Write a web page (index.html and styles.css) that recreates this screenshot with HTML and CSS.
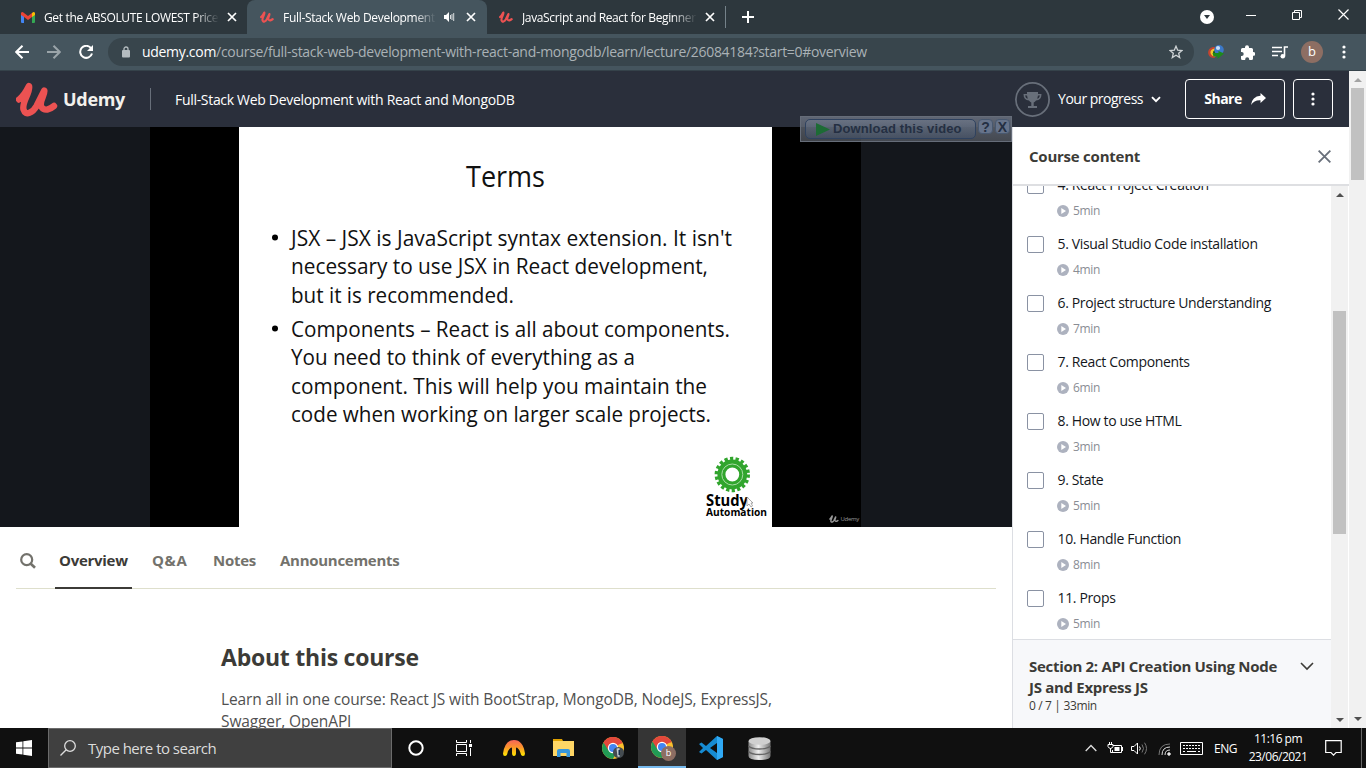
FILE: index.html
```html
<!DOCTYPE html>
<html lang="en">
<head>
<meta charset="utf-8">
<title>Full-Stack Web Development with React and MongoDB</title>
<link rel="stylesheet" href="styles.css">
</head>
<body>
<svg class="defs" width="0" height="0">
  <symbol id="u" viewBox="0 0 42 35"><path d="M3 17.500C8 14 10.500 9 13 4C15 10 5.500 20 7.500 27.500C9.500 34.500 17 30.500 20.500 24C23.500 18 26 13 28.300 8.500C29.500 12 22.500 20 25.500 25C28.500 29.500 34 27.500 38 24" fill="none" stroke="currentColor" stroke-width="6.400" stroke-linecap="round" stroke-linejoin="round"/></symbol>
  <symbol id="x" viewBox="0 0 10 10"><path d="M1 1l8 8M9 1l-8 8" fill="none" stroke="currentColor" stroke-width="1.700"/></symbol>
  <symbol id="play" viewBox="0 0 12 12"><circle cx="6" cy="6" r="6" fill="#adb2bf"/><path d="M4.300 3v6l4.700-3z" fill="#fff"/></symbol>
  <symbol id="chrome" viewBox="0 0 22 22"><circle cx="11" cy="11" r="11" fill="#fbc02d"/><path d="M11 11L1.500 5.500A11 11 0 0 1 20.500 5.500z" fill="#e3483c"/><path d="M11 11L1.500 5.500A11 11 0 0 0 11 22l4-8z" fill="#219b55"/><path d="M1.500 5.500l5 8 4.500-7h9.500A11 11 0 0 0 1.500 5.500" fill="#e3483c"/><circle cx="11" cy="11" r="5.200" fill="#fff"/><circle cx="11" cy="11" r="4" fill="#4285f4"/></symbol>
</svg>

<header class="tabs">
  <div class="tab">
    <svg class="gmail" viewBox="0 0 14 11"><path d="M0 1v9q0 1 1 1h2V4z" fill="#4285f4"/><path d="M14 1v9q0 1-1 1h-2V4z" fill="#34a853"/><path d="M11 4V1q2-2 3 0v2l-3 2z" fill="#fbbc04"/><path d="M0 3V1q1-2 3 0l4 3 4-3v4L7 8 3 5z" fill="#ea4335"/></svg>
    <span class="label t1">Get the ABSOLUTE LOWEST Price</span><svg class="close"><use href="#x"/></svg>
  </div>
  <div class="tab active">
    <svg class="fav"><use href="#u"/></svg><span class="label t2">Full-Stack Web Development</span>
    <svg class="sound" viewBox="0 0 11 10"><path d="M0 3h2l3-3v10l-3-3h-2z" fill="#fff"/><path d="M6.500 3v4M8 2v6M9.700 1v8" stroke="#fff" stroke-width=".8"/></svg>
    <svg class="close"><use href="#x"/></svg>
  </div>
  <div class="tab third">
    <svg class="fav"><use href="#u"/></svg><span class="label t3">JavaScript and React for Beginner</span><svg class="close"><use href="#x"/></svg>
  </div>
  <svg class="plus" viewBox="0 0 12 12"><path d="M6 0v12M0 6h12" stroke="#fff" stroke-width="2"/></svg>
  <div class="window">
    <svg width="14" height="14" viewBox="0 0 14 14"><circle cx="7" cy="7" r="7" fill="#fff"/><path d="M4 5h6l-3 4z" fill="#2d373d"/></svg>
    <svg class="min" width="10" height="10"><path d="M0 5.500h10" stroke="#fff"/></svg>
    <svg class="max" width="10" height="10" fill="none" stroke="#fff"><path d="M.5 2.500h7v7h-7zM2.500 2.500v-2h7v7h-2"/></svg>
    <svg class="quit" width="11" height="11"><path d="M.5.5l10 10M10.500.5l-10 10" stroke="#fff" stroke-width="1.200"/></svg>
  </div>
</header>

<nav class="toolbar">
  <svg class="nav" viewBox="0 0 14 14"><path d="M14 7H1.500M7.500.7L1.200 7l6.300 6.300" fill="none" stroke="#fff" stroke-width="2"/></svg>
  <svg class="nav dim" viewBox="0 0 14 14"><path d="M0 7h12.500M6.500.7L12.800 7l-6.300 6.300" fill="none" stroke="#9aa4a9" stroke-width="2"/></svg>
  <svg class="nav reload" viewBox="0 0 14 14"><path d="M12 3.200A6 6 0 1 0 13 8.500" fill="none" stroke="#fff" stroke-width="2"/><path d="M14 0v6H8z" fill="#fff"/></svg>
  <div class="omnibox">
    <svg width="8" height="12" viewBox="0 0 8 12"><rect y="4" width="8" height="7.500" rx="1" fill="#b4bcc0"/><path d="M2 5V3a2 2 0 0 1 4 0v2" fill="none" stroke="#b4bcc0" stroke-width="1.300"/></svg>
    <span class="url"><b>udemy.com</b>/course/full-stack-web-development-with-react-and-mongodb/learn/lecture/26084184?start=0#overview</span>
    <svg class="star" width="14" height="14" viewBox="0 0 14 14"><path d="M7 1.200l1.700 4 4.200.3-3.200 2.800 1 4.200L7 10.200l-3.700 2.300 1-4.200L1.100 5.500l4.200-.3z" fill="none" stroke="#cfd4d6" stroke-width="1.300"/></svg>
  </div>
  <svg class="idm" viewBox="0 0 16 14"><path d="M7 2C2 1.500-.5 5 .3 9q1 4 6.200 4L8 10z" fill="#c44430"/><path d="M7 3.500Q2 4 2.500 8q1 3.500 5 3.500z" fill="#f4c92d"/><path d="M7 5Q4.500 6 5 8l3 2z" fill="#1c5a1a"/><circle cx="11" cy="4.800" r="4.800" fill="#3c79c9"/><circle cx="10" cy="3" r="2.100" fill="#c9e0f7"/><path d="M4.500 8h6V6l5.500 2.500-6.500 5.500v-2.500H5.500z" fill="#1d8a1a"/></svg>
  <svg class="puzzle" viewBox="0 0 15 15"><path d="M1 4.500Q1 3 2.500 3H5V2.200a2 2 0 0 1 4 0V3h2.500Q13 3 13 4.500V7h.3a1.800 1.800 0 0 1 0 3.800H13v2.700q0 1.500-1.500 1.500H9.200v-.7a2 2 0 0 0-4 0v.7H2.500Q1 15 1 13.500V11h.7a2 2 0 0 0 0-4H1z" fill="#fff"/></svg>
  <svg class="queue" viewBox="0 0 16 13"><path d="M0 1.500h10M0 5.500h10M0 9.500h6M12.500 10V1H16" fill="none" stroke="#fff" stroke-width="1.600"/><circle cx="10.800" cy="10.200" r="2.300" fill="#fff"/></svg>
  <span class="avatar">b</span>
  <svg class="dots" viewBox="0 0 4 14"><circle cx="2" cy="2" r="1.600"/><circle cx="2" cy="7" r="1.600"/><circle cx="2" cy="12" r="1.600"/></svg>
</nav>

<div class="page">
  <div class="viewport">
    <header class="site">
      <svg class="logo"><use href="#u"/></svg><span class="brand">Udemy</span>
      <span class="course">Full-Stack Web Development with React and MongoDB</span>
      <div class="progress">
        <svg width="35" height="35" viewBox="0 0 35 35"><circle cx="17.500" cy="17.500" r="16.600" fill="none" stroke="#686f7a" stroke-width="1.800"/><path d="M12 10h11v2h3.500q0 6-5.500 6.500-1 1.500-2.300 2V24H22v2h-9v-2h3.300v-3.500q-1.300-.5-2.300-2Q8.500 18 8.500 12H12zM10 13.500q.5 2.700 2.800 3.300L12 13.500zM25 13.500h-2l-.8 3.300q2.300-.6 2.800-3.300" fill="#686f7a"/></svg>
        <span>Your progress</span>
        <svg width="10" height="7"><path d="M1 1.200l4 4 4-4" fill="none" stroke="#fff" stroke-width="1.900"/></svg>
      </div>
      <div class="btn share"><span>Share</span><svg width="15" height="12" viewBox="0 0 15 12"><path d="M9.500 0L15 5l-5.500 5V7.300Q3 7 0 12 1 3.500 9.500 2.800z" fill="#fff"/></svg></div>
      <div class="btn more"><svg class="dots" viewBox="0 0 4 14"><circle cx="2" cy="2" r="1.600"/><circle cx="2" cy="7" r="1.600"/><circle cx="2" cy="12" r="1.600"/></svg></div>
    </header>
    <div class="columns">
      <main>
        <div class="video"><div class="frame">
          <svg class="slide" width="533" height="400" viewBox="239 127 533 400">
            <rect x="239" y="127" width="533" height="400" fill="#fff"/>
            <g class="copy">
              <text class="heading" x="466" y="187" textLength="79" lengthAdjust="spacingAndGlyphs">Terms</text>
              <text x="291" y="245.500" textLength="441" lengthAdjust="spacingAndGlyphs">JSX – JSX is JavaScript syntax extension. It isn't</text>
              <text x="291" y="274" textLength="417" lengthAdjust="spacingAndGlyphs">necessary to use JSX in React development,</text>
              <text x="291" y="302.500" textLength="223" lengthAdjust="spacingAndGlyphs">but it is recommended.</text>
              <text x="291" y="336.500" textLength="439" lengthAdjust="spacingAndGlyphs">Components – React is all about components.</text>
              <text x="291" y="365" textLength="344" lengthAdjust="spacingAndGlyphs">You need to think of everything as a</text>
              <text x="291" y="393.500" textLength="416" lengthAdjust="spacingAndGlyphs">component. This will help you maintain the</text>
              <text x="291" y="422" textLength="420" lengthAdjust="spacingAndGlyphs">code when working on larger scale projects.</text>
            </g>
            <circle cx="275" cy="237.500" r="3"/><circle cx="275" cy="328.500" r="3"/>
            <circle cx="732.300" cy="474.500" r="15.700" fill="none" stroke="#31a52d" stroke-width="4" stroke-dasharray="3.200 2.280"/>
            <circle cx="732.300" cy="474.500" r="10.900" fill="none" stroke="#31a52d" stroke-width="8"/>
            <circle cx="732.300" cy="474.500" r="10.500" fill="none" stroke="#a9dca6" stroke-width="1"/>
            <text class="study" x="706" y="505.500" textLength="42" lengthAdjust="spacingAndGlyphs">Study</text>
            <text class="auto" x="706" y="516" textLength="61" lengthAdjust="spacingAndGlyphs">Automation</text>
            <path d="M747 497v9l2-2 2 3 1.500-1-1.500-3h2z" fill="#fff" stroke="#888" stroke-width=".7"/>
          </svg>
          <div class="watermark"><svg width="10" height="8"><use href="#u"/></svg>Udemy</div>
        </div></div>
        <nav class="menu">
          <svg width="16" height="16" viewBox="0 0 16 16"><circle cx="6.700" cy="6.700" r="5.500" fill="none" stroke="#73726c" stroke-width="2.200"/><path d="M10.500 10.500l4.500 4.300" stroke="#73726c" stroke-width="2.600"/></svg>
          <span class="on">Overview</span><span class="m2">Q&amp;A</span><span class="m3">Notes</span><span class="m4">Announcements</span>
        </nav>
        <section class="about"><h1>About this course</h1><p>Learn all in one course: React JS with BootStrap, MongoDB, NodeJS, ExpressJS,<br><span>Swagger, OpenAPI</span></p></section>
      </main>
      <aside>
        <div class="aside-head"><span>Course content</span><svg width="13" height="13" viewBox="0 0 10 10"><path d="M.5.5l9 9M9.500.5l-9 9" fill="none" stroke="#686f7a" stroke-width="1.400"/></svg></div>
        <div class="aside-body">
          <div class="lessons">
            <div class="list">
              <div class="item"><i></i><p>4. React Project Creation</p><small><svg><use href="#play"/></svg>5min</small></div>
              <div class="item"><i></i><p>5. Visual Studio Code installation</p><small><svg><use href="#play"/></svg>4min</small></div>
              <div class="item"><i></i><p>6. Project structure Understanding</p><small><svg><use href="#play"/></svg>7min</small></div>
              <div class="item"><i></i><p>7. React Components</p><small><svg><use href="#play"/></svg>6min</small></div>
              <div class="item"><i></i><p>8. How to use HTML</p><small><svg><use href="#play"/></svg>3min</small></div>
              <div class="item"><i></i><p>9. State</p><small><svg><use href="#play"/></svg>5min</small></div>
              <div class="item"><i></i><p>10. Handle Function</p><small><svg><use href="#play"/></svg>8min</small></div>
              <div class="item"><i></i><p>11. Props</p><small><svg><use href="#play"/></svg>5min</small></div>
            </div>
            <div class="next"><div><h2>Section 2: API Creation Using Node<br>JS and Express JS</h2><p>0 / 7 | 33min</p></div><svg width="14" height="9"><path d="M1 1l6 6 6-6" fill="none" stroke="#3c3b37" stroke-width="1.600"/></svg></div>
          </div>
          <div class="bar inner"><svg width="8" height="4"><path d="M0 4l4-4 4 4z" fill="#505050"/></svg><div class="thumb"></div><svg width="8" height="4"><path d="M0 0l4 4 4-4z" fill="#505050"/></svg></div>
        </div>
      </aside>
    </div>
    <div class="download"><div class="dl-main"><svg width="14" height="13"><path d="M0 0l14 6.500L0 13z" fill="#1d6b35"/></svg><span>Download this video</span></div><b>?</b><b>X</b></div>
  </div>
  <div class="bar outer"><svg width="8" height="4"><path d="M0 4l4-4 4 4z" fill="#a3a3a3"/></svg><div class="thumb"></div><svg width="8" height="4"><path d="M0 0l4 4 4-4z" fill="#505050"/></svg></div>
</div>

<footer class="taskbar">
  <div class="start"><svg width="16" height="16"><path d="M0 2.300l6.500-.9v6.200H0zM7.300 1.300L16 0v7.600H7.300zM0 8.400h6.500v6.200L0 13.700zM7.300 8.400H16V16l-8.700-1.300z" fill="#fff"/></svg></div>
  <div class="search"><svg width="16" height="16"><circle cx="10" cy="6" r="5.300" fill="none" stroke="#ddd" stroke-width="1.300"/><path d="M6.200 9.800L.5 15.500" stroke="#ddd" stroke-width="1.300"/></svg><span>Type here to search</span></div>
  <div class="app cortana"><svg width="16" height="16"><circle cx="8" cy="8" r="6.700" fill="none" stroke="#fff" stroke-width="2"/></svg></div>
  <div class="app"><svg width="16" height="16" fill="none" stroke="#fff"><path d="M.5 0v2.500h10V0M.5 16v-2.500h10V16M.5 4.500h10v7H.5zM14.500 0v3M14.500 8v8"/><path d="M13 5.500h3" stroke-width="3"/></svg></div>
  <div class="app arc"><svg width="24" height="18" viewBox="0 0 24 18"><defs><linearGradient id="fire" x2="0" y2="1"><stop stop-color="#f6655b"/><stop offset=".45" stop-color="#fb932c"/><stop offset="1" stop-color="#ffea00"/></linearGradient></defs><path d="M1 14.500Q3 1 12 1t11 13.500q0 2.500-2 2.500t-2.500-3q-.5-3-3-5-1.500-1-1.500.5V14q0 3-2 3t-2-3V9.500Q10 8 8.500 9q-2.500 2-3 5-.5 3-2.500 3t-2-2.500" fill="url(#fire)"/></svg></div>
  <div class="app"><svg width="21" height="18"><path d="M0 0h9l1 2H0z" fill="#e0a100"/><path d="M0 2h21v15H0z" fill="#ffd665"/><path d="M4 18v-6q0-2 2-2h9q2 0 2 2v6h-3.500v-4h-6v4z" fill="#3897db"/></svg></div>
  <div class="app"><svg class="chrome"><use href="#chrome"/></svg><svg class="badge" width="11" height="11"><circle cx="5.500" cy="5.500" r="5.500" fill="#444b50"/><path d="M3.500 1.500l3-.5v9l-2-.5z" fill="#c2cbd0"/><path d="M5.500 3H7v5H5.500z" fill="#172d4c"/></svg></div>
  <div class="app current"><svg class="chrome"><use href="#chrome"/></svg><span class="badge who">b</span></div>
  <div class="app"><svg width="24" height="24" viewBox="0 0 24 24"><path d="M18 0L7 10 2.500 6.500 0 8l4 4-4 4 2.500 1.500L7 14l11 10 6-3V3zM18 7v10l-7-5z" fill="#168bd2"/><path d="M18 0l6 3v18l-6 3z" fill="#30a9f4"/></svg></div>
  <div class="app"><svg width="23" height="23" viewBox="0 0 23 23"><defs><linearGradient id="disk"><stop stop-color="#8b8b8b"/><stop offset=".45" stop-color="#eee"/><stop offset="1" stop-color="#777"/></linearGradient></defs><path d="M.5 4v15q0 4 11 4t11-4V4z" fill="url(#disk)"/><ellipse cx="11.500" cy="4" rx="11" ry="3.800" fill="#d0d0d0"/><path d="M.5 9q3 3 11 3t11-3M.5 14.500q3 3 11 3t11-3" fill="none" stroke="#666" stroke-width="1.300"/></svg></div>
  <div class="tray">
    <svg class="up" width="12" height="8"><path d="M.7 7L6 1.500 11.300 7" fill="none" stroke="#ddd" stroke-width="1.300"/></svg>
    <svg class="batt" width="17" height="12" fill="none" stroke="#fff"><path d="M6 3.500h8.500v7h-9V8M15.500 5v4M1 2.500h5v2Q5 6.500 3.500 6.500T1 4.500zM2.500 0v2M4.500 0v2M3.500 6v4.500H6"/><path d="M7.500 5h5v4h-5z" fill="#fff" stroke="none"/></svg>
    <svg class="vol" width="17" height="13" fill="none" stroke="#fff"><path d="M.5 4.500H3l3.500-3.500v11L3 8.500H.5z"/><path d="M8.500 4.500q1.500 2 0 4"/><path d="M11 2.500q3 4 0 8M13.500.7q4 5.800 0 11.600" stroke="#777"/></svg>
    <svg class="wifi" width="13" height="13" fill="none" stroke="#ddd"><circle cx="11" cy="11" r="1.300" fill="#fff"/><path d="M7 12q0-5 5-5M4 12q0-8 8-8"/><path d="M1 12Q1 1 12 1" stroke="#777"/></svg>
    <svg class="keys" width="23" height="13" fill="none" stroke="#fff"><path d="M.5.5h22v12H.5z"/><path d="M3 3.500h17M3 6.500h17" stroke-dasharray="2 1"/><path d="M3 9.500h2M7 9.500h9M18 9.500h2"/></svg>
    <span class="eng">ENG</span>
    <div class="clock"><span>11:16 pm</span><span>23/06/2021</span></div>
    <svg class="note" width="17" height="16" fill="none" stroke="#fff"><path d="M.7.700h15.500v11.800H11l-2.500 2.600L6 12.500H.7z" stroke-width="1.200"/></svg>
    <div class="peek"></div>
  </div>
</footer>
</body>
</html>
```
FILE: styles.css
```css
* { box-sizing: border-box; }
body { margin: 0; width: 1366px; height: 768px; overflow: hidden; display: flex; flex-direction: column; font-family: "Open Sans", "Noto Sans", sans-serif; background: #fff; }
svg { display: block; flex: none; }
.defs { position: absolute; }
p, h1, h2 { margin: 0; }
span { white-space: nowrap; }

.tabs { height: 34px; flex: none; display: flex; align-items: center; background: #2d373d; color: #fff; font-size: 12px; }
.tab { height: 34px; display: flex; align-items: center; width: 247px; padding-left: 21px; }
.tab.active { width: 240px; padding-left: 13px; background: #45555e; border-radius: 8px 8px 0 0; }
.tab.third { width: 239px; padding-left: 12px; border-right: 1px solid transparent; border-image: linear-gradient(transparent 7px, #75828a 7px, #75828a 27px, transparent 27px) 1; }
.gmail { width: 14px; height: 11px; margin-right: 9px; }
.fav { width: 14px; height: 12px; margin-right: 9px; color: #ec5252; }
.label { width: 175px; overflow: hidden; letter-spacing: -.35px; -webkit-mask-image: linear-gradient(90deg, #000 86%, transparent); mask-image: linear-gradient(90deg, #000 86%, transparent); }
.t2 { width: 153px; letter-spacing: -.3px; }
.t3 { letter-spacing: -.36px; }
.close { width: 10px; height: 10px; margin-left: 8px; }
.sound { width: 11px; height: 10px; margin: 0 3px 0 8px; }
.plus { width: 12px; height: 12px; margin-left: 16px; }
.window { margin-left: auto; display: flex; align-items: center; padding-right: 17px; }
.min { margin-left: 32px; margin-top: -4px; }
.max { margin-left: 36px; margin-top: -5px; }
.quit { margin-left: 36px; margin-top: -5px; }

.toolbar { height: 37px; flex: none; display: flex; align-items: center; background: #45555e; border-bottom: 1px solid #35424a; padding-left: 15px; }
.nav { width: 14px; height: 14px; margin-right: 18px; }
.reload { margin-right: 15px; }
.omnibox { width: 1086px; height: 28px; border-radius: 14px; background: #38454c; display: flex; align-items: center; padding-left: 14px; }
.url { margin-left: 12px; font-size: 14px; line-height: 28px; height: 28px; color: #aab2b6; letter-spacing: -.3px; }
.url b { font-weight: 400; color: #fff; }
.star { margin-left: auto; margin-right: 11px; }
.idm { width: 16px; height: 14px; margin-left: 14px; }
.puzzle { width: 15px; height: 15px; margin-left: 16px; }
.queue { width: 16px; height: 13px; margin-left: 17px; }
.avatar { width: 22px; height: 22px; border-radius: 50%; background: #8d6e63; color: #fff; font-size: 13px; line-height: 21px; text-align: center; margin-left: 13px; }
.dots { width: 4px; height: 14px; fill: #fff; }
.toolbar .dots { margin-left: 19px; }

.page { height: 657px; flex: none; display: flex; }
.viewport { width: 1349px; position: relative; display: flex; flex-direction: column; overflow: hidden; }
.site { height: 56px; flex: none; display: flex; align-items: center; background: #2a2f3b; color: #fff; padding: 0 16px; }
.logo { width: 42px; height: 35px; color: #ec5252; }
.brand { width: 93px; height: 22px; line-height: 22px; font-size: 18px; font-weight: 700; letter-spacing: -.3px; padding-left: 5px; border-right: 1px solid #686f7a; color: #f3f1ec; }
.course { margin-left: 24px; font-size: 14px; font-weight: 500; letter-spacing: -.31px; }
.progress { margin-left: auto; display: flex; align-items: center; gap: 8px; font-size: 14px; font-weight: 500; margin-right: 24px; }
.progress span { letter-spacing: -.5px; margin-top: -1px; }
.btn { height: 40px; border: 1px solid #fff; border-radius: 4px; display: flex; align-items: center; justify-content: center; }
.share { width: 100px; gap: 9px; font-size: 14px; font-weight: 700; letter-spacing: -.5px; }
.share span { margin-top: -1px; }
.more { width: 40px; margin-left: 8px; }

.columns { display: flex; flex: 1; min-height: 0; }
main { width: 1012px; }
.video { height: 400px; background: #14171c; padding-left: 150px; }
.frame { width: 711px; height: 400px; background: #000; display: flex; align-items: flex-end; padding-left: 89px; }
.copy text { font-size: 21.500px; fill: #111; }
.copy .heading { font-size: 29px; }
.study { font-size: 15.500px; font-weight: 700; }
.auto { font-size: 11px; font-weight: 700; }
.watermark { margin-left: auto; display: flex; align-items: center; gap: 2px; color: #999; font-size: 6px; letter-spacing: -.3px; padding: 0 2px 4px 0; }
.menu { height: 62px; margin: 0 16px; border-bottom: 1px solid #dedfcc; display: flex; font-size: 15px; font-weight: 700; color: #73726c; letter-spacing: -.28px; }
.menu svg { margin: 26px 19px 0 4px; }
.menu span { height: 62px; line-height: 67px; }
.menu .on { color: #3c3b37; border-bottom: 2px solid #3c3b37; width: 77px; padding-left: 4px; }
.menu .m2 { margin-left: 20px; width: 61px; letter-spacing: .6px; }
.m3 { width: 67px; }
.about { padding: 51px 0 0 221px; color: #3c3b37; }
.about h1 { font-size: 23px; line-height: 34px; letter-spacing: -.24px; font-weight: 700; }
.about p { font-size: 15.500px; line-height: 22px; margin-top: 14px; color: #505050; letter-spacing: -.12px; }

aside { width: 337px; border-left: 1px solid #dcdee3; display: flex; flex-direction: column; }
.aside-head { height: 59px; flex: none; border-bottom: 2px solid #dedfe2; display: flex; align-items: center; padding: 1px 18px 0 16px; justify-content: space-between; font-size: 15px; font-weight: 700; color: #3c3b37; letter-spacing: -.23px; }
.aside-body { display: flex; flex: 1; min-height: 0; overflow: hidden; }
.lessons { width: 318px; display: flex; flex-direction: column; }
.list { height: 453px; overflow: hidden; display: flex; flex-direction: column; justify-content: flex-end; }
.item { height: 59px; flex: none; display: grid; grid-template-columns: 17px 1fr; column-gap: 13px; grid-template-rows: 25px 1fr; padding-left: 14px; align-items: start; }
.item:last-child { height: 53px; }
.item i { width: 17px; height: 17px; border: 1px solid #8a92a3; border-radius: 2px; margin-top: 4px; }
.item p { font-size: 14px; line-height: 24px; color: #14171c; letter-spacing: -.35px; padding-left: .5px; }
.item small { grid-column: 2; display: flex; align-items: center; font-size: 12px; line-height: 24px; color: #8a8d94; gap: 4px; letter-spacing: -.3px; margin-top: 1px; }
.item small svg { width: 12px; height: 12px; margin-top: -1px; }
.next { flex: 1; background: #f7f8fa; border-top: 1px solid #dcdee3; display: flex; justify-content: space-between; padding: 16px 17px 0 16px; color: #3c3b37; }
.next svg { margin-top: 6px; }
.next h2 { font-size: 15px; line-height: 21px; letter-spacing: -.3px; white-space: nowrap; }
.next p { font-size: 12px; line-height: 16px; letter-spacing: -.35px; }
.bar { width: 17px; background: #f1f1f1; display: flex; flex-direction: column; align-items: center; justify-content: space-between; padding: 7px 0; }
.thumb { width: 13px; background: #c1c1c1; }
.inner { padding: 7px 0 6px; }
.inner .thumb { height: 223px; margin-top: 114px; margin-bottom: auto; }
.outer .thumb { height: 92px; margin-top: 6px; margin-bottom: auto; }

.download { position: absolute; left: 800px; top: 45px; width: 212px; height: 26px; border: 1px solid #666d79; background: linear-gradient(rgba(112,120,135,.75), rgba(85,90,99,.75)); display: flex; align-items: flex-start; gap: 2px; padding: 2px 0 0 4px; font-family: "Liberation Sans", sans-serif; font-weight: 700; color: #242f42; }
.dl-main { width: 171px; height: 20px; border: 1px solid #2f425f; border-radius: 5px; display: flex; align-items: center; padding-left: 10px; gap: 3px; font-size: 13px; letter-spacing: .12px; background: linear-gradient(#7c879b66, #465a7966); }
.dl-main span { margin-top: -1px; }
.download b { width: 15px; height: 15px; border-radius: 4px; border: 1px solid #48586f; background: #66738a; font-size: 14px; line-height: 14px; text-align: center; }

.taskbar { height: 40px; flex: none; display: flex; background: #101010; color: #fff; }
.start { width: 48px; display: flex; align-items: center; justify-content: center; }
.search { width: 344px; border: 1px solid #6b6b6b; background: #404040; display: flex; align-items: center; padding-left: 11px; gap: 12px; font-size: 15px; color: #dcdcdc; letter-spacing: -.52px; }
.app { width: 49px; display: flex; align-items: center; justify-content: center; position: relative; }
.cortana { width: 47px; }
.arc { width: 51px; }
.chrome { width: 22px; height: 22px; }
.current { width: 48px; margin-left: 1px; background: #353535; border-bottom: 2px solid #76b9ed; }
.badge { position: absolute; left: 25px; top: 19px; }
.who { left: 23px; top: 18px; width: 15px; height: 15px; border-radius: 50%; background: #8d6e63; font-size: 9px; line-height: 14px; text-align: center; }
.tray { margin-left: auto; display: flex; align-items: center; font-size: 12px; }
.up { margin-right: 0; }
.batt { margin-left: 10px; }
.vol { margin-left: 7px; }
.wifi { margin-left: 10px; margin-top: 3px; }
.keys { margin-left: 9px; }
.eng { margin-left: 11px; width: 24px; letter-spacing: -.5px; }
.clock { width: 60px; margin-left: 10px; display: flex; flex-direction: column; align-items: center; line-height: 18px; letter-spacing: -.5px; }
.note { margin-left: 17px; }
.peek { width: 1px; height: 40px; background: #666; margin: 0 4px 0 19px; }
```
